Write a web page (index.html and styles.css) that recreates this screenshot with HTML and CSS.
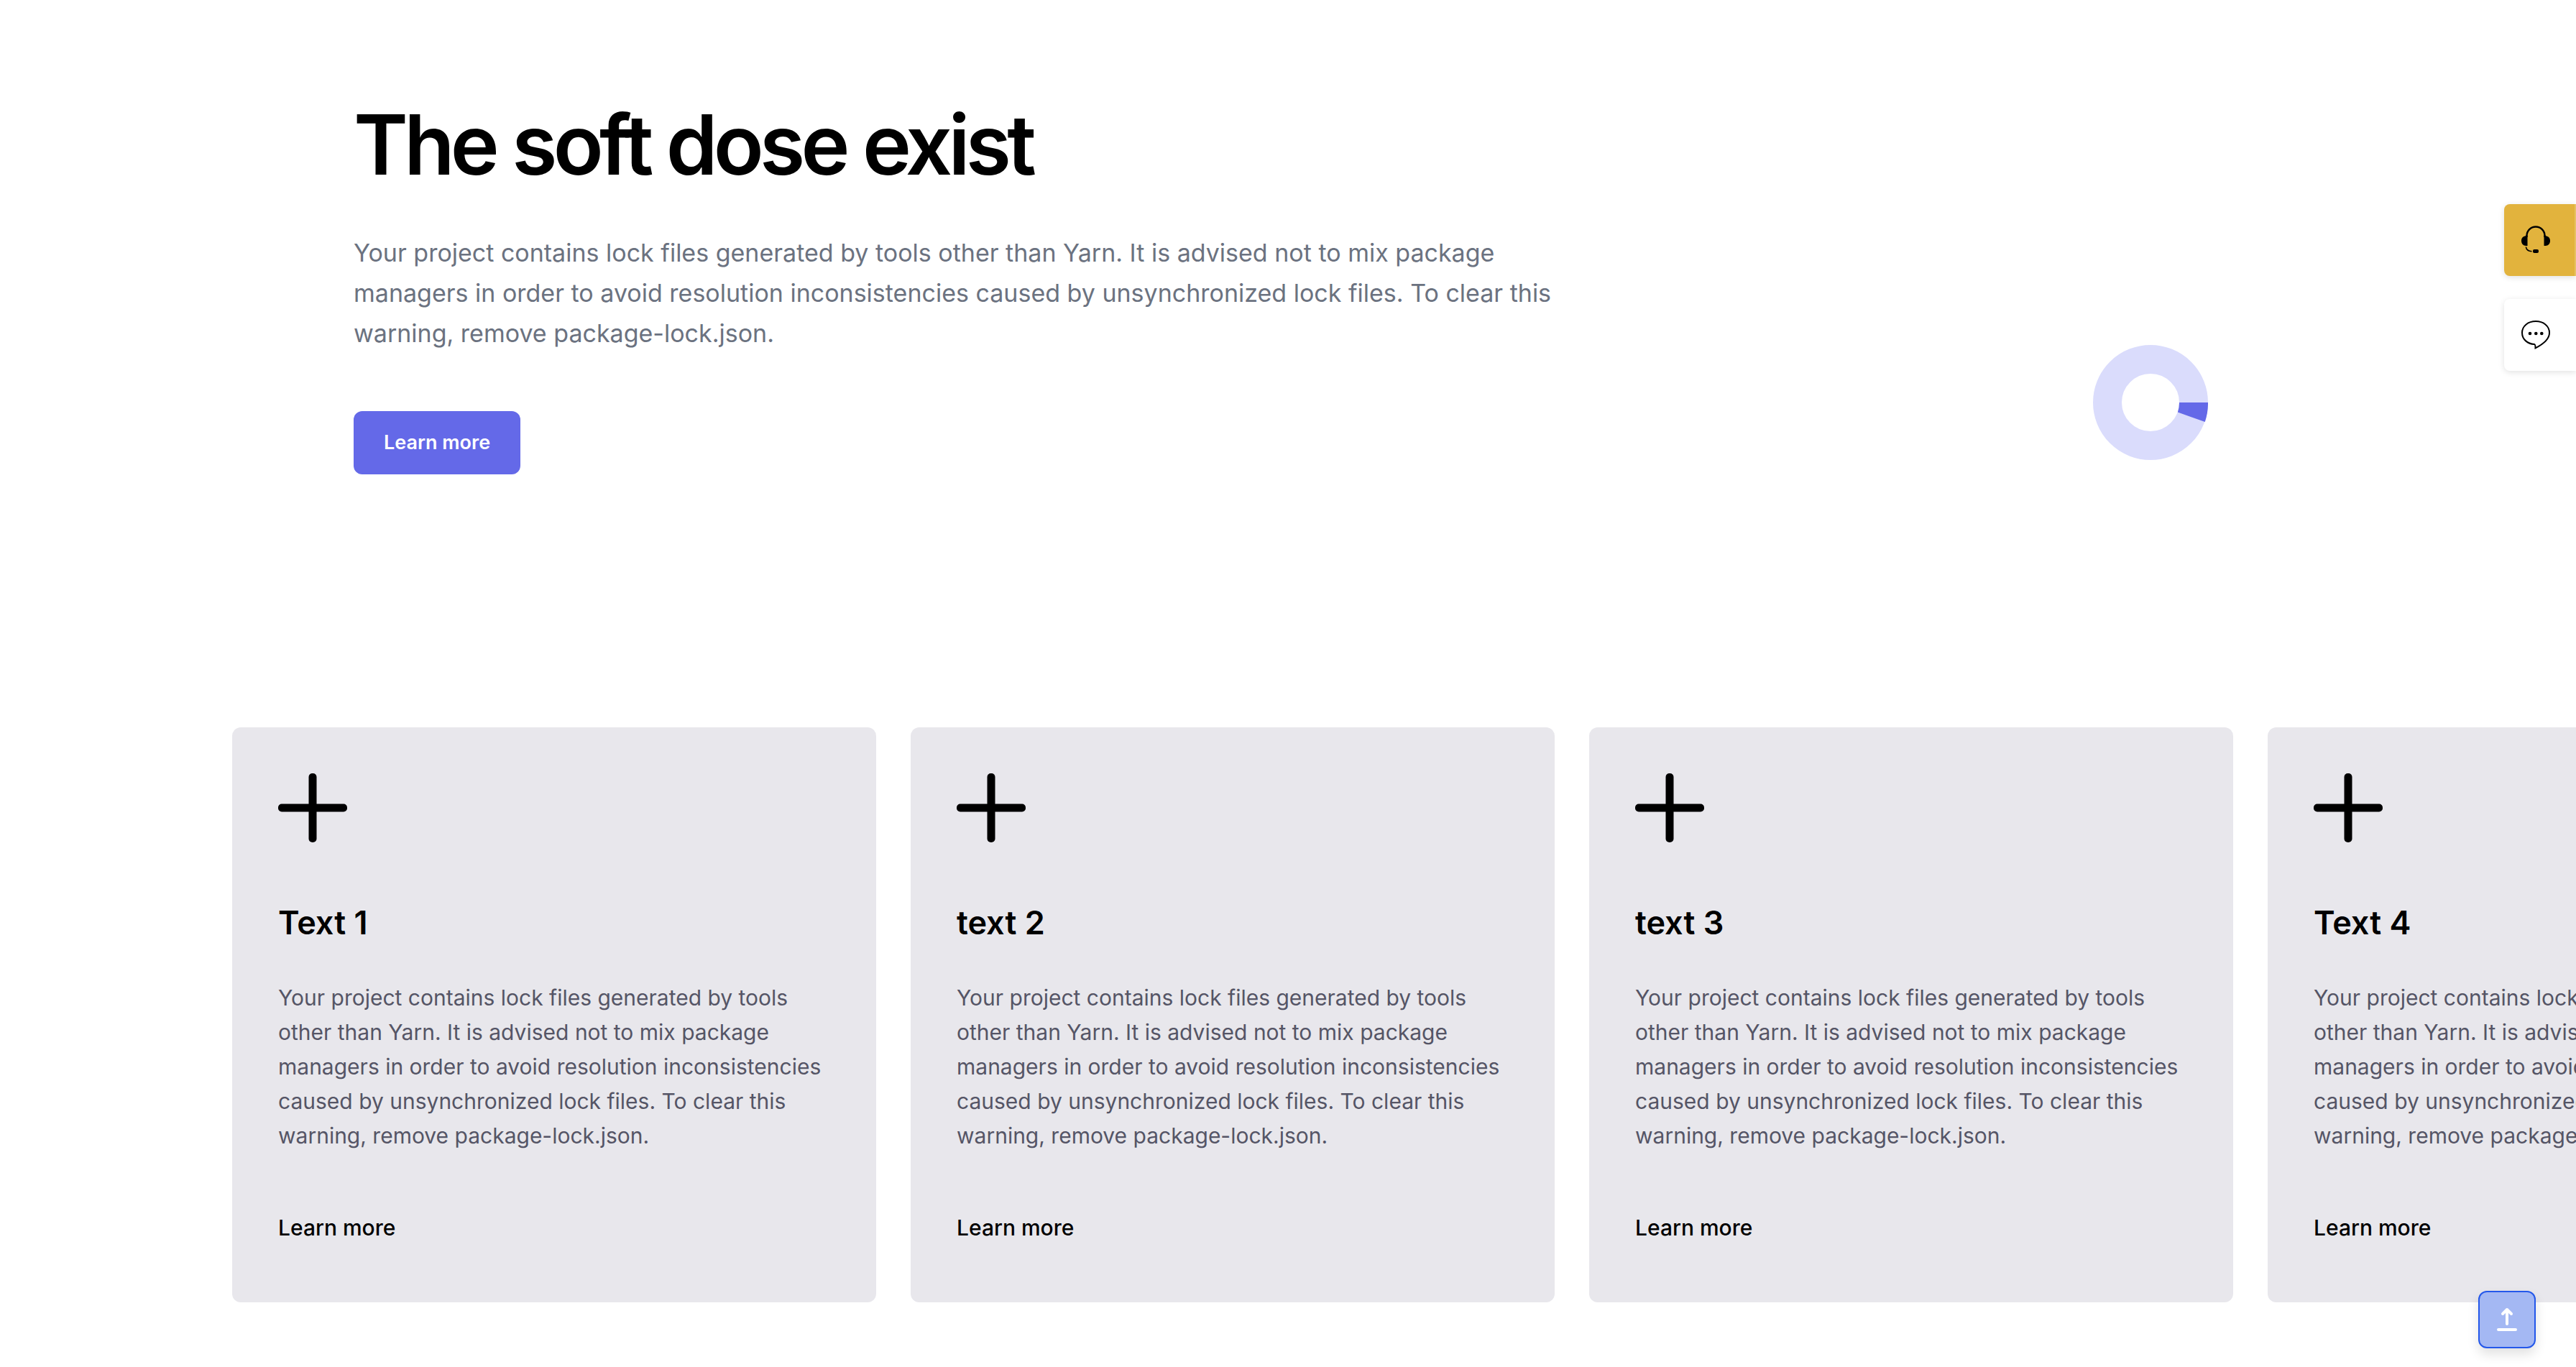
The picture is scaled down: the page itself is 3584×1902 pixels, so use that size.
FILE: index.html
```html
<!DOCTYPE html>
<html lang="en">
<head>
<meta charset="utf-8">
<meta name="viewport" content="width=device-width, initial-scale=1">
<title>The soft dose exist</title>
<link rel="stylesheet" href="styles.css">
</head>
<body>
<svg class="sprite" aria-hidden="true">
  <symbol id="plus" viewBox="0 0 96 96">
    <rect x="0" y="42.500" width="96" height="11" rx="5"/>
    <rect x="42.500" y="0" width="11" height="96" rx="5"/>
  </symbol>
</svg>

<main>
  <section class="hero">
    <div class="hero-copy">
      <h1 class="hero-title">The soft dose exist</h1>
      <p class="hero-text">Your project contains lock files generated by tools other than Yarn. It is advised not to mix package managers in order to avoid resolution inconsistencies caused by unsynchronized lock files. To clear this warning, remove package-lock.json.</p>
      <button class="button" type="button">Learn more</button>
    </div>
    <div class="hero-visual">
      <svg class="loader" viewBox="0 0 160 160" role="img" aria-label="Loading">
        <circle class="loader-track" cx="80" cy="80" r="60"/>
        <path class="loader-slice" d="M120 80H160A80 80 0 0 1 155.800 107L117.900 93.500A40 40 0 0 0 120 80Z"/>
      </svg>
    </div>
  </section>

  <section class="cards">
    <article class="card">
      <svg class="card-icon" aria-hidden="true"><use href="#plus"/></svg>
      <h2 class="card-title">Text 1</h2>
      <p class="card-text">Your project contains lock files generated by tools other than Yarn. It is advised not to mix package managers in order to avoid resolution inconsistencies caused by unsynchronized lock files. To clear this warning, remove package-lock.json.</p>
      <a class="card-link" href="#">Learn more</a>
    </article>
    <article class="card">
      <svg class="card-icon" aria-hidden="true"><use href="#plus"/></svg>
      <h2 class="card-title">text 2</h2>
      <p class="card-text">Your project contains lock files generated by tools other than Yarn. It is advised not to mix package managers in order to avoid resolution inconsistencies caused by unsynchronized lock files. To clear this warning, remove package-lock.json.</p>
      <a class="card-link" href="#">Learn more</a>
    </article>
    <article class="card">
      <svg class="card-icon" aria-hidden="true"><use href="#plus"/></svg>
      <h2 class="card-title">text 3</h2>
      <p class="card-text">Your project contains lock files generated by tools other than Yarn. It is advised not to mix package managers in order to avoid resolution inconsistencies caused by unsynchronized lock files. To clear this warning, remove package-lock.json.</p>
      <a class="card-link" href="#">Learn more</a>
    </article>
    <article class="card">
      <svg class="card-icon" aria-hidden="true"><use href="#plus"/></svg>
      <h2 class="card-title">Text 4</h2>
      <p class="card-text">Your project contains lock files generated by tools other than Yarn. It is advised not to mix package managers in order to avoid resolution inconsistencies caused by unsynchronized lock files. To clear this warning, remove package-lock.json.</p>
      <a class="card-link" href="#">Learn more</a>
    </article>
  </section>
</main>

<aside class="dock" aria-label="Support">
  <button class="dock-item dock-item-support" type="button" aria-label="Support">
    <svg class="dock-icon" viewBox="0 0 40 40" aria-hidden="true">
      <path d="M7.500 16V14A12.500 12.500 0 0 1 32.500 14V16" fill="none" stroke="#000" stroke-width="2.400"/>
      <path d="M8.500 13.500V28H6.500C2.500 28 0 25 0 21C0 17 2.500 14.500 6 14.200V13.500ZM31.500 13.500V28H33.500C37.500 28 40 25 40 21C40 17 37.500 14.500 34 14.200V13.500Z"/>
      <path d="M6.300 29.500C7 33.500 10 35.600 14.500 35.800" fill="none" stroke="#000" stroke-width="1.500"/>
      <rect x="16" y="33" width="8" height="5" rx="2"/>
    </svg>
  </button>
  <button class="dock-item" type="button" aria-label="Chat">
    <svg class="dock-icon" viewBox="0 0 40 40" aria-hidden="true">
      <path d="M20 1C9.500 1 1 7.500 1 17C1 26.500 9 32.500 18 33C19.200 33.100 19.500 33.800 19.500 38.300C28 34 39 27 39 17C39 7.500 30.500 1 20 1Z" fill="none" stroke="#000" stroke-width="2"/>
      <circle cx="12" cy="18" r="2.300"/><circle cx="20.300" cy="18" r="2.300"/><circle cx="28.300" cy="18" r="2.300"/>
    </svg>
  </button>
</aside>

<button class="to-top" type="button" aria-label="Back to top">
  <svg class="to-top-icon" viewBox="0 0 48 48" aria-hidden="true">
    <path d="M24 30V10M18 16L24 10L30 16M12 38H36" fill="none" stroke="#fff" stroke-width="4" stroke-linecap="round" stroke-linejoin="round"/>
  </svg>
</button>
</body>
</html>
```
FILE: styles.css
```css
*,
*::before,
*::after {
  box-sizing: border-box;
}

body {
  margin: 0;
  overflow-x: hidden;
  background: #fff;
  color: #000;
  font-family: Inter, "Liberation Sans", sans-serif;
}

h1,
h2,
p {
  margin: 0;
}

button {
  font: inherit;
  border: 0;
  cursor: pointer;
}

.sprite {
  display: none;
}

.hero {
  display: grid;
  grid-template-columns: minmax(0, 1680px) 1fr;
  padding: 140px 512px 32px 492px;
}

.hero-title {
  margin-bottom: 60px;
  font-size: 115px;
  font-weight: 600;
  line-height: 124px;
  letter-spacing: -0.05em;
}

.hero-text {
  margin-bottom: 80px;
  color: #6b7280;
  font-size: 34px;
  line-height: 56px;
}

.button {
  padding: 20px 42px;
  border-radius: 12px;
  background: #6469e8;
  color: #fff;
  font-size: 27px;
  font-weight: 600;
  line-height: 48px;
}

.hero-visual {
  display: flex;
  align-items: center;
  justify-content: flex-end;
  min-height: 840px;
}

.loader {
  width: 160px;
  height: 160px;
}

.loader-track {
  fill: none;
  stroke: #dadcfc;
  stroke-width: 40;
}

.loader-slice {
  fill: #6469e8;
}

.cards {
  display: flex;
  gap: 48px;
  padding: 0 0 90px 323px;
  overflow: hidden;
}

.card {
  flex: 0 0 896px;
  padding: 64px 64px 80px;
  border-radius: 12px;
  background: #e8e7ec;
}

.card-icon {
  display: block;
  width: 96px;
  height: 96px;
  margin-bottom: 80px;
}

.card-title {
  margin-bottom: 48px;
  font-size: 45px;
  font-weight: 600;
  line-height: 64px;
}

.card-text {
  margin-bottom: 80px;
  color: #555566;
  font-size: 30px;
  line-height: 48px;
}

.card-link {
  display: block;
  color: #000;
  font-size: 30px;
  font-weight: 500;
  line-height: 48px;
  text-decoration: none;
}

.dock {
  position: fixed;
  top: 284px;
  right: 0;
  display: grid;
  gap: 32px;
}

.dock-item {
  width: 100px;
  height: 100px;
  padding: 0 12px 0 0;
  border-radius: 8px 0 0 8px;
  background: #fff;
  box-shadow: 0 2px 8px rgba(0, 0, 0, 0.12);
}

.dock-item-support {
  border-right: 2px solid #e7c163;
  padding-right: 10px;
  background: #e2b33d;
}

.dock-icon {
  display: block;
  width: 40px;
  height: 40px;
  margin: 0 auto;
}

.to-top {
  position: fixed;
  right: 56px;
  bottom: 26px;
  display: grid;
  place-items: center;
  width: 80px;
  height: 80px;
  padding: 0;
  border: 2px solid #2458ea;
  border-radius: 12px;
  background: #a4b8f3;
  box-shadow: 0 8px 16px rgba(0, 0, 0, 0.12);
}

.to-top-icon {
  width: 48px;
  height: 48px;
}
```
